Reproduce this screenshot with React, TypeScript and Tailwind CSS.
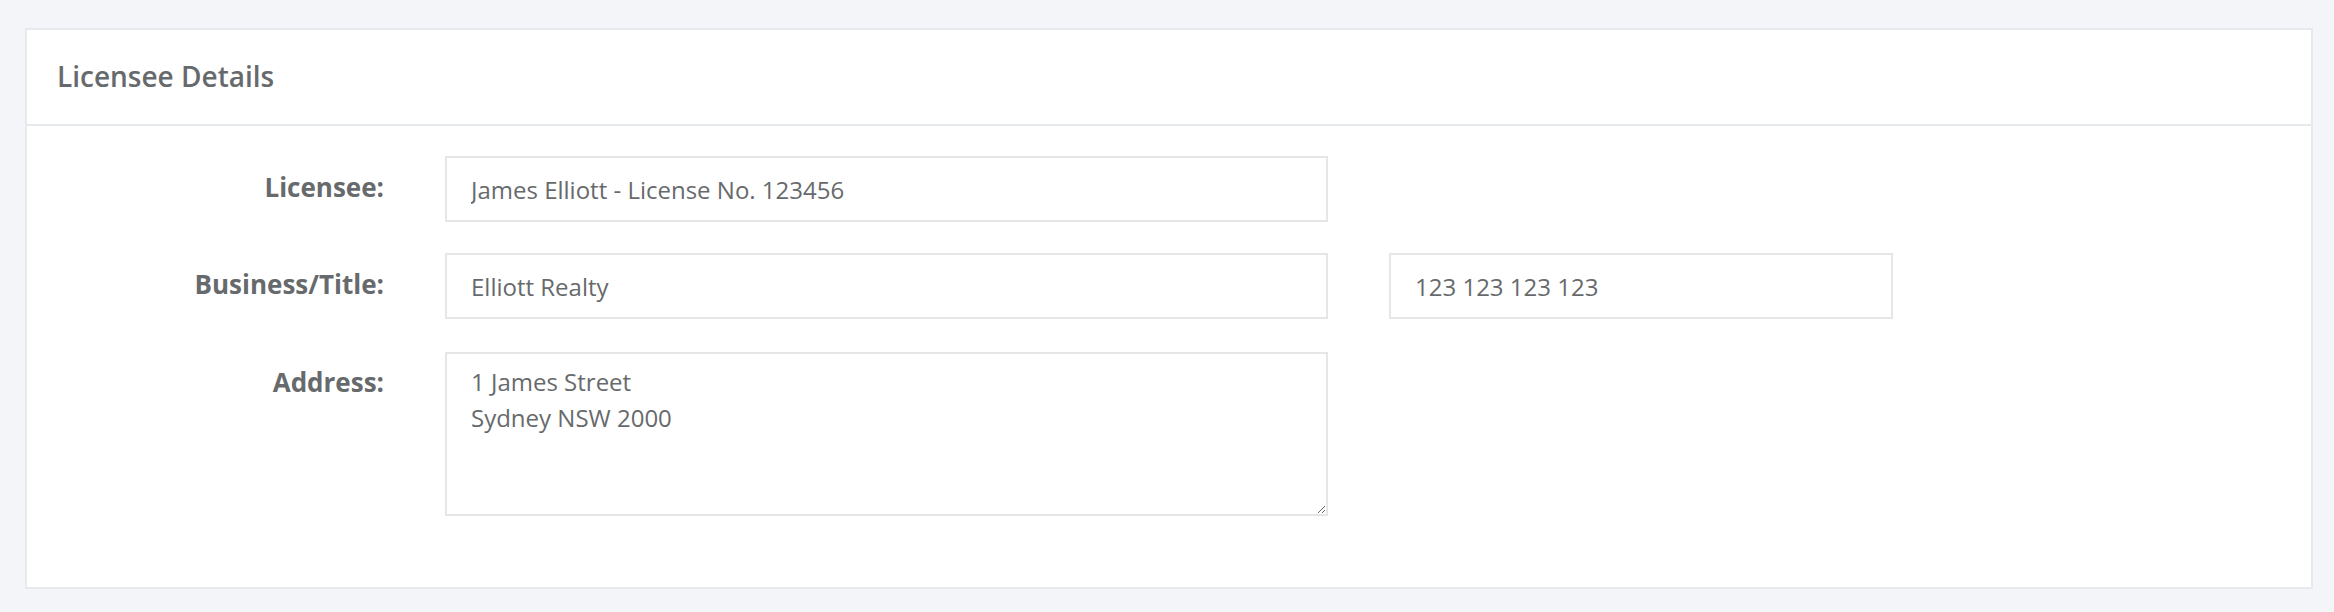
export default function App() {
  return (
    <div
      className="min-h-screen bg-[#f4f5f8] pl-[25px] pr-[21px] pt-[28px] pb-6 text-[#676a6c]"
      style={{ fontFamily: '"Open Sans", "Noto Sans", sans-serif' }}
    >
      <div className="border-2 border-[#e7eaec] bg-white">
        {/* header */}
        <div className="flex h-[96px] items-center border-b-2 border-[#e7eaec] pb-[3px] pl-[30px]">
          <h5 className="text-[28px] font-semibold leading-none">Licensee Details</h5>
        </div>

        {/* body */}
        <div className="pt-[30px] pb-[71px]">
          <div className="mb-[31px] flex items-start">
            <label className="w-[357px] pt-[13px] text-right text-[26px] font-bold leading-[36px]">
              Licensee:
            </label>
            <input
              readOnly
              value="James Elliott - License No. 123456"
              className="ml-[61px] h-[66px] w-[883px] border-2 border-[#e5e6e7] bg-white px-6 text-[24px] text-[#676a6c] outline-none"
            />
          </div>

          <div className="mb-[33px] flex items-start">
            <label className="w-[357px] pt-[13px] text-right text-[26px] font-bold leading-[36px]">
              Business/Title:
            </label>
            <input
              readOnly
              value="Elliott Realty"
              className="ml-[61px] h-[66px] w-[883px] border-2 border-[#e5e6e7] bg-white px-6 text-[24px] text-[#676a6c] outline-none"
            />
            <input
              readOnly
              value="123 123 123 123"
              className="ml-[61px] h-[66px] w-[504px] border-2 border-[#e5e6e7] bg-white px-6 text-[24px] text-[#676a6c] outline-none"
            />
          </div>

          <div className="flex items-start">
            <label className="w-[357px] pt-[12px] text-right text-[26px] font-bold leading-[36px]">
              Address:
            </label>
            <textarea
              readOnly
              value={'1 James Street\nSydney NSW 2000'}
              className="ml-[61px] h-[164px] w-[883px] border-2 border-[#e5e6e7] bg-white px-6 pt-[10px] pb-3 text-[24px] leading-[36px] text-[#676a6c] outline-none"
            />
          </div>
        </div>
      </div>
    </div>
  );
}
